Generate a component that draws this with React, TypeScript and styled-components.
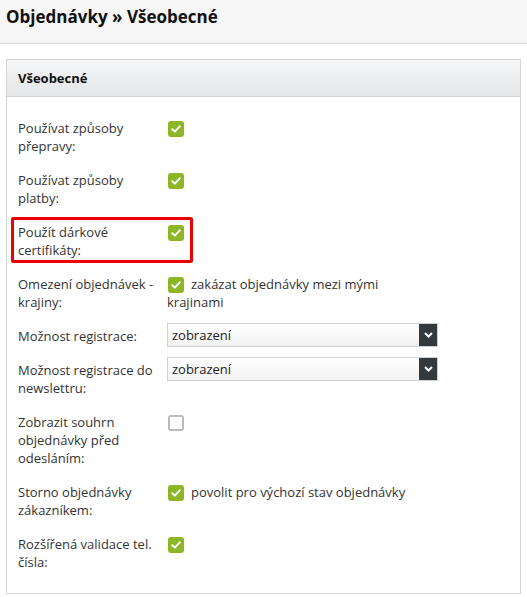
import * as React from 'react';
import styled, { createGlobalStyle } from 'styled-components';

const GlobalStyle = createGlobalStyle`
  html, body {
    margin: 0;
    padding: 0;
    background: #ffffff;
  }
  body {
    font-family: 'Open Sans', 'Liberation Sans', sans-serif;
    color: #333333;
  }
`;

const TopBar = styled.header`
  height: 44px;
  box-sizing: border-box;
  padding: 5px 6px 0;
  background: #f6f6f6;
  border-bottom: 1px solid #d4d4d4;
`;

const Title = styled.h1`
  margin: 0;
  font-size: 17px;
  line-height: 24px;
  font-weight: 700;
  color: #111111;
`;

const Panel = styled.section`
  margin: 15px 6px 0;
  border: 1px solid #d3d3d3;
  width: 515px;
  box-sizing: border-box;
`;

const PanelHeader = styled.div`
  height: 37px;
  box-sizing: border-box;
  padding: 0 11px;
  display: flex;
  align-items: center;
  background: linear-gradient(to bottom, #f5f6f7, #e4e6e8);
  border-bottom: 1px solid #d3d3d3;
  font-size: 13px;
  font-weight: 700;
  color: #111111;
`;

const PanelBody = styled.div`
  padding: 14px 0 14px;
`;

const Row = styled.div`
  position: relative;
  display: grid;
  grid-template-columns: 160px 272px;
  font-size: 13px;
  line-height: 18px;
`;

const Label = styled.div`
  padding: 8px 9px 8px 11px;
`;

const Value = styled.div<{ $select?: boolean }>`
  padding: ${({ $select }) => ($select ? '4px 0 6px' : '8px 10px 8px 0')};
`;

const Highlight = styled.div`
  position: absolute;
  top: 2px;
  left: 4px;
  width: 182px;
  height: 46px;
  box-sizing: border-box;
  border: 3px solid #ee0000;
  border-radius: 2px;
  pointer-events: none;
`;

const Box = styled.span<{ $checked: boolean }>`
  display: inline-flex;
  align-items: center;
  justify-content: center;
  vertical-align: top;
  margin: 2px 7px 0 1px;
  width: 16px;
  height: 16px;
  box-sizing: border-box;
  border-radius: 3px;
  background: ${({ $checked }) => ($checked ? '#8cb626' : '#ffffff')};
  border: ${({ $checked }) => ($checked ? 'none' : '2px solid #bcbcbc')};
`;

const SelectBox = styled.div`
  display: flex;
  width: 271px;
  height: 24px;
  box-sizing: border-box;
  border: 1px solid #d0d0d0;
  background: linear-gradient(to bottom, #ffffff, #f1f1f1);
`;

const SelectText = styled.span`
  flex: 1;
  padding-left: 4px;
  line-height: 22px;
  color: #222222;
`;

const SelectArrow = styled.span`
  width: 18px;
  background: #34393d;
  display: flex;
  align-items: center;
  justify-content: center;
`;

const Check = ({ checked }: { checked: boolean }) => (
  <Box $checked={checked}>
    {checked && (
      <svg width="10" height="8" viewBox="0 0 10 8">
        <path d="M1.2 4.2 L3.8 6.6 L8.8 1.4" fill="none" stroke="#ffffff" strokeWidth="2" strokeLinecap="round" strokeLinejoin="round" />
      </svg>
    )}
  </Box>
);

const Select = ({ value }: { value: string }) => (
  <SelectBox>
    <SelectText>{value}</SelectText>
    <SelectArrow>
      <svg width="9" height="6" viewBox="0 0 9 6">
        <path d="M1 1 L4.5 4.5 L8 1" fill="none" stroke="#ffffff" strokeWidth="2" />
      </svg>
    </SelectArrow>
  </SelectBox>
);

interface RowData {
  label: string;
  checked?: boolean;
  text?: string;
  select?: string;
  highlight?: boolean;
}

const ROWS: RowData[] = [
  { label: 'Používat způsoby přepravy:', checked: true },
  { label: 'Používat způsoby platby:', checked: true },
  { label: 'Použít dárkové certifikáty:', checked: true, highlight: true },
  { label: 'Omezení objednávek - krajiny:', checked: true, text: 'zakázat objednávky mezi mými krajinami' },
  { label: 'Možnost registrace:', select: 'zobrazení' },
  { label: 'Možnost registrace do newslettru:', select: 'zobrazení' },
  { label: 'Zobrazit souhrn objednávky před odesláním:', checked: false },
  { label: 'Storno objednávky zákazníkem:', checked: true, text: 'povolit pro výchozí stav objednávky' },
  { label: 'Rozšířená validace tel. čísla:', checked: true }
];

const App: React.FunctionComponent = () => (
  <>
    <GlobalStyle />
    <TopBar>
      <Title>Objednávky » Všeobecné</Title>
    </TopBar>
    <Panel>
      <PanelHeader>Všeobecné</PanelHeader>
      <PanelBody>
        {ROWS.map((row) => (
          <Row key={row.label}>
            <Label>{row.label}</Label>
            {row.select ? (
              <Value $select>
                <Select value={row.select} />
              </Value>
            ) : (
              <Value>
                <Check checked={!!row.checked} />
                {row.text}
              </Value>
            )}
            {row.highlight && <Highlight />}
          </Row>
        ))}
      </PanelBody>
    </Panel>
  </>
);

export default App;
